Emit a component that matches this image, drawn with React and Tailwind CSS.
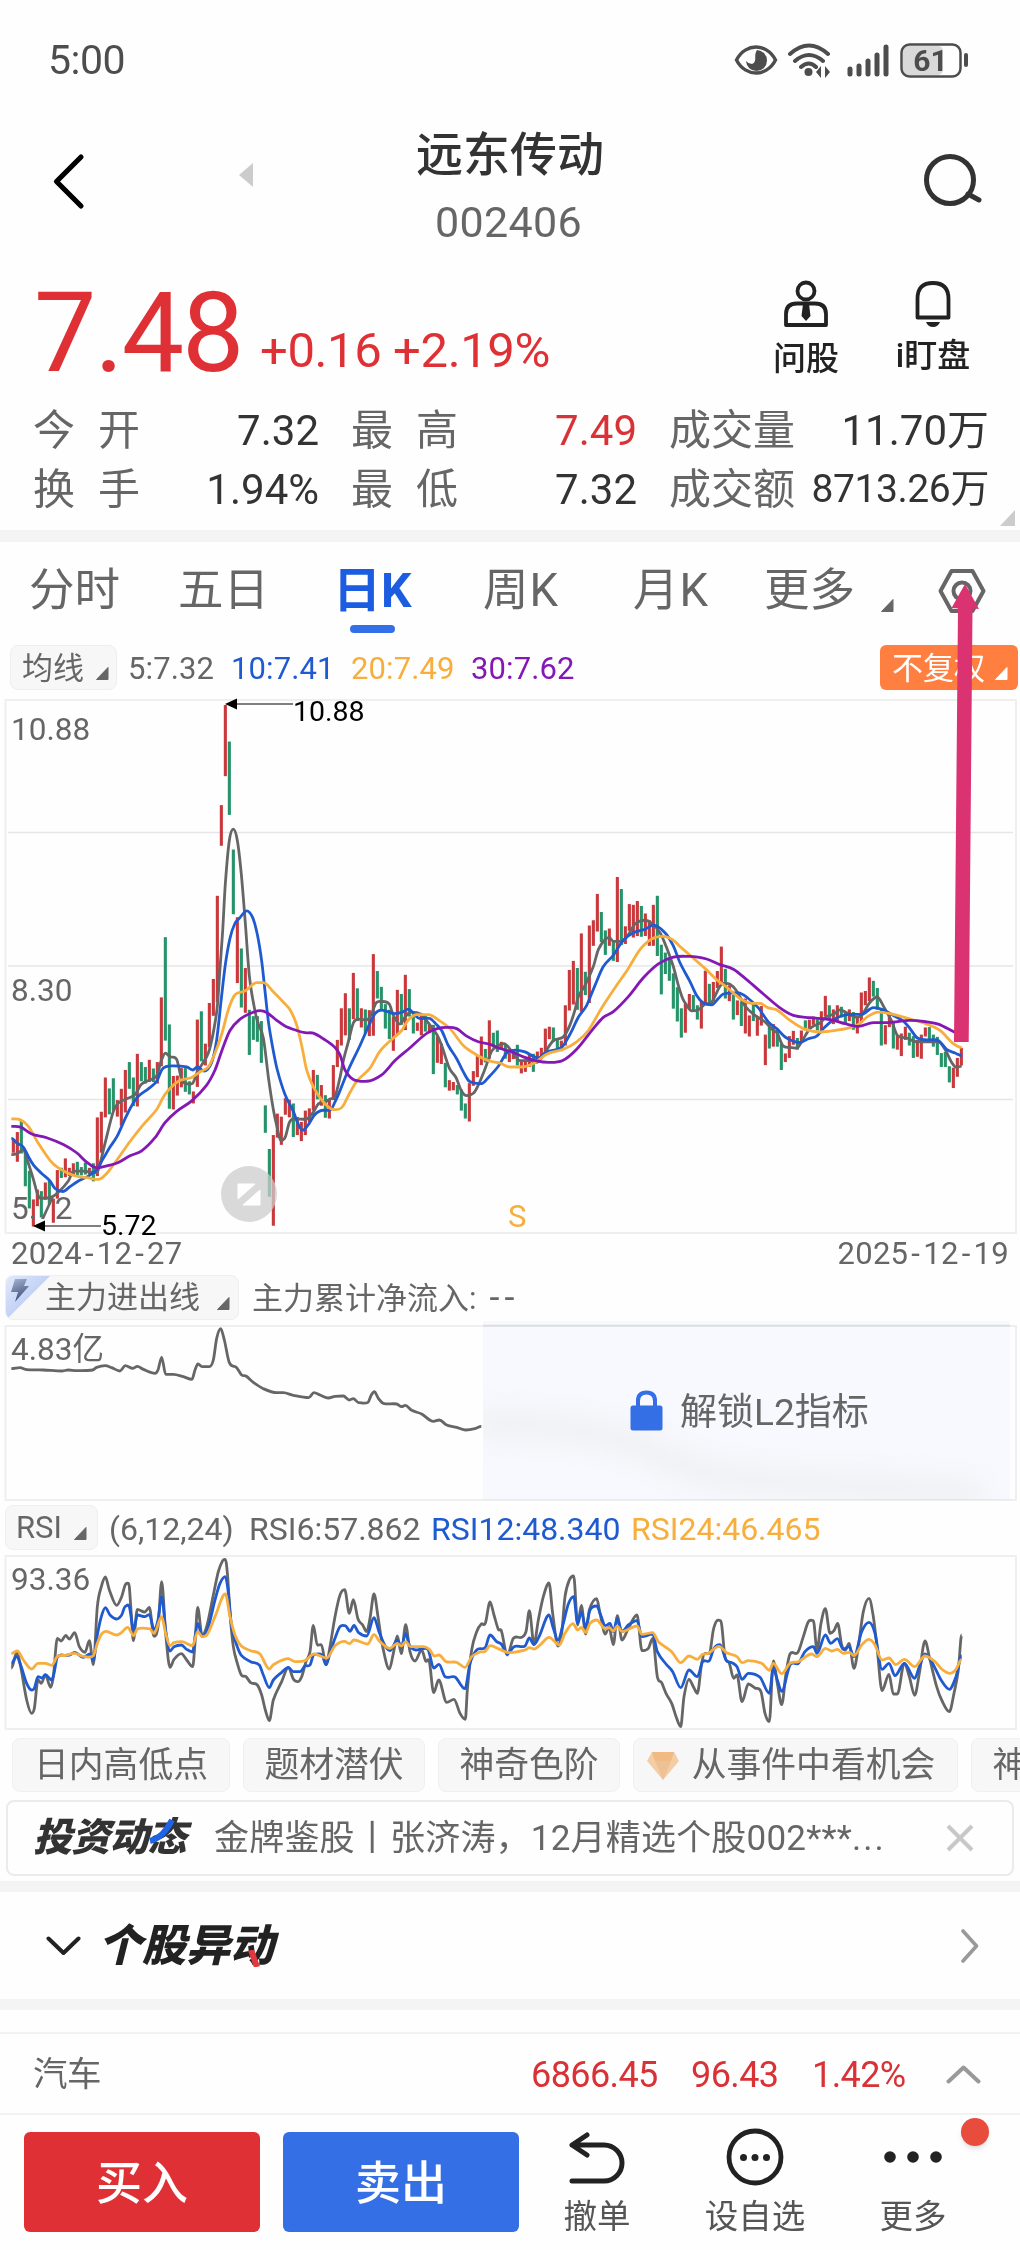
import clsx from 'clsx';

// Daily bars: r = up, g = down, followed by high-low in plot units
const BARS = `r1195-1230 r1175-1254 g1145-1232 g1225-1319 g1278-1378 r1354-1426 r1328-1372 g1332-1402 r1309-1355 g1305-1368
r1352-1416 r1276-1352 g1270-1297 r1245-1295 r1270-1292 r1258-1290 g1254-1290 g1268-1290 g1256-1288 r1270-1288
g1258-1306 r1136-1292 r1121-1230 r1030-1136 g1059-1128 g1032-1118 r1090-1134 r1060-1158 r1010-1123 g989-1060
g1030-1106 r967-1107 g989-1040 g1002-1046 r983-1042 g1006-1042 r989-1046 r817-1000 g657-932 g889-1113
r1026-1115 r1025-1078 r1005-1056 g1005-1068 g1040-1075 r1067-1099 r876-1055 g854-987 r940-998 r832-950
r768-866 r547-830 r306-414 r40-229 g137-332 g424-596 r604-779 g687-844 r739-858 g850-970
g867-930 g867-935 g880-991 g1104-1177 g1220-1347 r1183-1424 r1126-1190 r1134-1209 r1085-1129 r1089-1136
g1099-1188 r1135-1183 r1148-1199 r1118-1183 r1112-1148 r1010-1118 g1023-1088 r1050-1105 g1077-1137 r1088-1139
r997-1090 r930-1002 r846-945 r806-918 g846-930 r752-875 g793-880 r846-897 g849-912 r851-920
r702-919 g747-820 g789-850 g835-900 g850-928 r868-959 r797-916 g808-890 r757-904 g795-868
g862-913 r884-906 r866-918 g866-908 r888-912 g890-1021 r920-991 r940-994 g991-1056 r1037-1065
r1042-1064 g1050-1075 g1062-1118 g1099-1139 r1045-1147 r1013-1052 r970-1029 r921-997 g954-990 r878-980
g911-950 g905-962 r935-952 g943-980 r965-989 r955-981 g943-998 r988-1019 r982-1015 r970-1002
g967-1015 r961-987 r951-980 r900-965 r895-928 g897-935 g930-956 r932-960 r838-945 r744-852
r720-836 g739-850 r647-855 g749-811 r626-832 r612-680 r542-642 g590-670 g639-704 r634-680
g670-720 r497-723 g529-678 r628-675 r569-640 r571-658 r561-654 g574-656 r594-654 r612-680
r571-680 g547-707 g677-809 g698-755 g710-773 g753-847 g790-881 g846-924 r834-911 r808-850
g811-855 g838-876 r828-900 r746-832 g781-838 r776-828 r747-792 r682-780 g741-820 r785-827
g810-876 r825-864 g828-893 r820-913 r865-921 g835-880 r870-919 r840-892 r916-997 g892-953
r888-948 g900-948 g940-1010 r966-989 r920-978 r906-943 g925-956 r905-935 g878-905 r876-900
r868-890 g875-905 r854-905 r813-868 g838-875 r849-888 r838-880 g842-870 g855-888 r849-880
g856-903 r870-913 r804-885 r800-838 r764-827 g773-815 g792-850 g850-945 r891-942 r862-896
g880-953 r918-956 r913-973 r895-930 g911-945 g920-978 r930-975 r916-980 r897-921 g896-930
g916-948 g922-970 g965-1002 g962-1002 g1000-1043 r1004-1058 r978-1028 r951-998`.split(/\s+/);

// Each line is three runs of points; every run starts one screen further right
const MA5 = [
    '34,1235 52,1232 70,1222 82,1250 100,1300 115,1345 136,1350 155,1348 175,1335 205,1305 220,1279 250,1279 285,1283 295,1275 315,1205 340,1120 355,1098 376,1088 405,1075 424,1048 448,1037 470,1025 484,985 496,965 510,975 530,982 545,1035 556,1046 578,1045 592,1015 606,995 625,965 640,910 652,840 660,740 668,640 676,515 688,400 700,370 712,400 724,490 736,620 748,760 760,830 772,880 790,925 806,1035 820,1115 832,1165 842,1197 855,1190 868,1150 880,1140 916,1141 940,1122 955,1100 976,1095 990,1087 1005,1080',
    '0,1030 10,985 25,935 40,885 55,875 80,877 95,860 108,832 125,828 148,835 160,865 180,888 196,868 212,856 244,862 265,885 290,915 305,945 328,1005 348,1030 364,1065 380,1078 400,1072 415,1050 436,1005 455,960 475,945 492,940 515,960 540,985 570,985 590,990 610,970 640,932 670,922 690,890 705,850 715,815 735,785 760,735 775,690 795,663 808,658 820,668 845,668 865,650 885,622 915,612 935,620 960,645 980,685 1000,735 1015,785',
    '8,820 20,838 35,853 55,850 75,835 95,830 118,790 130,780 150,782 170,800 195,840 225,865 255,882 280,905 292,912 308,945 330,950 350,952 365,935 390,900 420,885 440,868 460,862 480,850 500,858 530,870 545,865 570,830 592,816 610,840 635,880 652,918 680,925 710,935 740,935 775,935 795,955 815,990 830,1003 845,1000',
];
const MA10 = [
    '34,1192 52,1205 70,1215 85,1240 100,1262 125,1285 150,1305 165,1325 188,1333 210,1320 235,1305 265,1292 290,1275 310,1245 330,1215 352,1185 375,1140 395,1105 415,1080 445,1060 470,1040 485,1010 498,1001 520,999 560,1002 578,1010 592,1002 612,1013 635,990 650,930 664,820 676,730 690,660 704,622 720,605 740,587 758,605 772,650 785,720 795,800 805,880 818,950 832,1010 855,1075 880,1120 895,1155 908,1170 925,1155 945,1128 970,1117 990,1117 1005,1095',
    '0,1065 25,1010 60,945 85,895 105,860 125,851 165,860 188,856 205,848 235,872 270,873 290,890 305,905 325,945 350,980 370,1015 388,1040 425,1046 445,1030 475,1000 500,965 525,957 555,962 595,978 620,962 665,950 690,915 715,870 740,838 765,785 790,735 820,705 850,665 880,645 915,636 940,625 975,645 1000,680',
    '0,725 30,775 50,812 70,832 95,837 115,820 130,808 175,805 205,820 235,845 265,882 290,900 320,925 360,937 385,927 410,920 430,900 455,880 480,868 510,862 545,862 580,844 610,850 640,865 670,880 690,900 712,925 740,930 775,932 800,955 825,965 845,972',
];
const MA20 = [
    '34,1140 60,1142 85,1160 115,1205 150,1250 175,1270 220,1290 265,1297 295,1301 320,1285 350,1250 390,1200 430,1155 470,1115 495,1075 535,1040 575,1030 600,1015 625,1002 645,965 665,915 685,850 705,810 735,800 770,778 790,778 820,802 850,830 870,850 890,890 905,945 920,1010 940,1055 970,1095 1000,1115',
    '5,1110 30,1070 50,1040 90,1005 120,960 160,925 185,905 205,877 230,863 265,863 300,880 330,900 370,945 410,970 445,985 480,992 510,1002 545,1002 580,993 620,968 670,955 710,935 745,905 785,845 830,785 865,740 900,690 935,662 970,655 1000,665',
    '0,682 30,705 75,740 110,770 140,790 180,820 215,833 240,833 265,845 290,850 330,878 370,900 420,909 480,903 530,892 565,867 595,856 630,860 680,872 740,888 780,905 820,940 845,950',
];
const MA30 = [
    '34,1160 62,1162 95,1180 140,1190 190,1208 230,1230 260,1255 290,1270 330,1263 355,1256 390,1238 425,1225 465,1190 495,1150 530,1120 575,1092 620,1050 645,1010 665,960 690,905 720,875 750,860 780,852 800,857 830,878 855,893 890,905 915,911 940,912 970,927 1005,950',
    '0,970 15,1010 40,1035 80,1040 125,1023 165,985 205,955 265,910 320,897 350,900 380,920 415,935 450,942 480,953 510,960 550,975 590,986 625,990 668,985 710,955 760,900 790,870 820,855 865,815 910,765 955,728 1000,710',
    '30,708 80,715 120,730 160,742 200,770 250,808 300,845 340,865 390,871 450,876 495,887 535,894 580,884 625,884 690,878 740,882 775,888 820,908 835,915',
];
const FLOW = ['34,326 60,323 80,329 130,330 185,333 205,330 230,332 278,330 290,322 315,317 335,323 360,333 376,317 398,325 412,319 430,328 465,340 474,330 485,292 497,343 520,343 550,350 576,358 585,330 594,312 606,320 628,320 640,300 650,235 662,206 673,240 688,308 710,323 725,345 738,348 760,367 790,386 830,398 850,398 880,406 926,413 942,398 960,405 985,414 1005,409 1030,408 1048,420 1060,416 1076,428 1104,427 1114,405 1123,395 1135,415 1150,430 1190,432 1205,440 1216,436 1235,451 1265,462 1300,484 1318,480 1340,495 1370,502 1397,510 1425,506 1444,499'];
const RSI6 = [
    '34,505 50,458 62,500 80,600 95,640 103,625 114,540 124,550 136,525 152,562 160,530 172,415 184,423 197,406 208,417 224,398 238,440 255,457 268,422 280,494 292,320 304,260 316,231 328,270 350,316 365,290 376,254 386,250 393,330 400,422 412,328 434,336 448,322 462,409 474,380 485,245 497,400 510,502 522,478 544,461 560,480 578,500 585,430 593,322 606,405 620,380 640,285 655,215 668,182 676,178 683,230 690,340 700,440 712,490 724,525 738,530 752,548 772,555 785,585 796,630 808,662 820,600 845,545 865,502 880,537 893,545 905,530 918,485 930,455 940,376 952,435 964,434 978,494 990,440 1005,350 1020,285 1034,269 1048,340 1060,299 1074,357 1088,375 1100,395 1110,355 1122,282 1134,350 1148,440 1168,507 1180,460 1192,408 1204,461 1217,374 1230,455 1245,483 1265,450 1277,483 1288,485 1301,578 1316,540 1340,607 1362,598 1380,640 1396,658 1402,570 1415,450 1430,395 1444,372 1456,370 1470,306 1482,345 1495,388',
    '4,392 22,465 40,415 65,412 78,395 88,332 102,432 115,360 130,290 147,249 158,340 174,438 185,400 195,290 208,240 221,228 233,375 244,316 257,402 268,330 290,296 300,340 316,402 327,380 340,434 352,347 366,420 385,385 411,345 426,452 445,445 458,415 472,530 485,548 498,580 515,610 530,655 542,680 552,590 567,538 580,560 592,580 605,490 615,460 628,460 640,390 650,363 662,362 675,470 688,490 701,535 711,525 726,605 745,552 765,564 783,575 795,640 808,665 820,483 832,550 845,614 858,520 870,462 893,458 910,410 925,365 940,362 951,450 963,370 976,326 990,400 1002,392 1013,370 1025,435 1036,450 1047,430 1062,505 1075,440 1090,335 1107,295 1120,350 1132,450 1146,572 1167,523 1180,582 1192,582 1213,490 1228,530 1244,586 1258,520 1275,423 1290,480 1310,560 1325,600 1348,635 1362,580 1375,510 1385,405',
];
const RSI12 = [
    '34,490 50,470 62,495 80,550 95,570 103,565 114,530 126,534 136,524 155,540 162,520 172,472 197,466 210,465 224,457 250,472 270,462 280,480 292,405 304,350 316,323 330,345 350,357 365,345 376,319 388,320 401,390 412,345 434,350 448,344 462,388 474,360 485,290 497,390 510,453 522,440 544,435 560,448 578,456 585,410 593,370 607,410 625,380 645,300 660,250 676,230 684,270 695,380 710,435 724,466 752,485 778,495 790,525 808,563 820,540 845,517 865,502 880,515 900,515 915,498 930,495 942,463 966,465 978,494 990,460 1005,415 1020,380 1036,377 1050,394 1062,376 1075,397 1100,408 1122,353 1137,395 1155,437 1170,452 1192,420 1204,442 1217,400 1228,435 1248,450 1270,446 1285,450 1301,504 1317,493 1335,530 1365,531 1395,566 1410,490 1430,450 1456,442 1470,405 1490,425',
    '4,432 22,462 42,440 75,438 88,414 102,434 118,408 147,345 160,385 174,420 190,370 205,312 221,290 233,370 244,336 257,382 270,330 290,318 302,345 316,377 330,370 340,395 352,357 366,395 385,375 411,362 426,410 458,402 472,455 498,492 518,515 542,563 567,510 592,530 608,485 628,482 642,445 660,434 678,480 695,488 711,500 726,538 745,520 780,532 808,580 820,505 832,540 845,574 870,495 895,490 915,455 940,440 951,460 976,405 992,430 1012,416 1030,448 1047,440 1062,470 1085,395 1107,367 1125,400 1146,508 1167,490 1185,527 1213,490 1244,535 1258,500 1275,462 1295,485 1325,543 1348,568 1368,530 1385,468',
];
const RSI24 = [
    '34,460 52,453 70,480 95,507 114,490 136,490 155,496 172,470 197,466 224,460 250,469 280,467 292,430 304,403 318,394 350,405 365,397 383,382 401,407 412,387 448,386 462,400 485,350 497,400 510,437 522,428 545,425 578,437 593,395 607,410 622,403 645,350 676,282 690,350 705,405 724,438 752,452 780,462 808,507 820,494 865,476 885,485 915,482 942,462 980,474 1005,437 1034,424 1048,431 1062,420 1103,432 1122,404 1140,425 1170,445 1192,430 1204,438 1217,425 1232,440 1270,440 1288,448 1303,468 1317,465 1338,485 1370,487 1395,502 1415,470 1440,456 1456,454 1470,437',
    '0,448 25,458 75,450 88,443 102,447 120,435 147,412 178,435 195,400 219,371 233,390 244,382 257,398 270,370 290,360 316,387 328,383 340,393 352,378 366,395 411,378 426,403 458,398 475,425 515,455 542,488 567,468 592,478 608,463 625,460 657,439 680,458 711,470 726,488 745,482 785,490 808,511 820,490 845,521 870,490 895,485 935,462 951,470 976,445 995,453 1012,448 1030,460 1048,457 1062,467 1085,435 1107,418 1125,435 1146,480 1167,474 1187,494 1213,478 1244,500 1275,468 1305,485 1325,507 1350,520 1368,508 1385,478',
];

const PRICE_UNIT = 2.658;

// Smooth curve through the points, flat at every local high and low
function curve(runs, step, unitY) {
    const pts = runs.flatMap((run, n) =>
        run.split(' ').map((pair) => {
            const [x, y] = pair.split(',').map(Number);
            return [(x + n * step) / 3, y / unitY];
        })
    );
    const slope = pts.map((p, i) => {
        const a = pts[i - 1];
        const b = pts[i + 1];
        if (!a || !b || (p[1] - a[1]) * (b[1] - p[1]) <= 0) return 0;
        return (b[1] - a[1]) / (b[0] - a[0]);
    });
    let d = `M${pts[0][0]} ${pts[0][1]}`;
    for (let i = 1; i < pts.length; i++) {
        const [x0, y0] = pts[i - 1];
        const [x1, y1] = pts[i];
        const h = (x1 - x0) / 3;
        d += `C${x0 + h} ${y0 + slope[i - 1] * h} ${x1 - h} ${y1 - slope[i] * h} ${x1} ${y1}`;
    }
    return d;
}

function Line({ runs, step, unitY, color }) {
    return <path d={curve(runs, step, unitY)} fill="none" stroke={color} strokeWidth="2.8" strokeLinejoin="round" />;
}

function Corner({ className }) {
    return (
        <svg className={clsx('shrink-0', className)} width="13" height="13" viewBox="0 0 13 13">
            <path d="M12 0.5V12.5H0.5Z" fill="currentColor" stroke="currentColor" strokeLinejoin="round" />
        </svg>
    );
}

function Chip({ className, children }) {
    return (
        <div className={clsx('flex h-[45px] shrink-0 items-center rounded-lg border border-[#efefef] bg-[#f7f7f7] text-[#666]', className)}>
            {children}
        </div>
    );
}

function StatusBar() {
    return (
        <div className="flex h-[120px] items-center pl-[48px] text-[#4d4d4d]">
            <div className="w-[686px] pt-[2px] text-[41px] tracking-[-0.5px]">5:00</div>
            <svg width="236" height="36" viewBox="733 41 236 36">
                <path d="M735.500 59C740 50 748 46 755 46S770 50 774.500 59C770 68 762 72 755 72S740 68 735.500 59Z" fill="none" stroke="#4d4d4d" strokeWidth="3.400" />
                <path d="M756 49A10.500 10.500 0 1 1 745 60A8 8 0 0 0 751 63C757 60 752 55 756 49Z" fill="#4d4d4d" />
                <g fill="none" stroke="#4d4d4d" strokeWidth="4" strokeLinecap="round">
                    <path d="M789 53Q808 36 827 53M794 60Q808 48 822 60M800 66Q808 59 815 66" />
                </g>
                <circle cx="807.500" cy="71" r="4" fill="#4d4d4d" />
                <path d="M820 65V77L815 71ZM824 65V77L829 71Z" fill="#4d4d4d" />
                <g stroke="#4d4d4d" strokeWidth="5" strokeLinecap="round">
                    <path d="M849 68V73M858 65V73M867 60V73M876 54V73M885 46V73" />
                </g>
                <rect x="902" y="45" width="40" height="29" rx="5" fill="#d9d9d9" />
                <rect x="900.500" y="43.500" width="59" height="32" rx="8" fill="none" stroke="#4d4d4d" strokeWidth="2.500" />
                <path d="M965 54V64" stroke="#4d4d4d" strokeWidth="4" strokeLinecap="round" />
                <text x="929.500" y="70" textAnchor="middle" fontSize="30" fontWeight="700" fill="#4d4d4d">61</text>
            </svg>
        </div>
    );
}

function Header() {
    return (
        <div className="flex h-[140px] items-start">
            <svg className="ml-[50px] mt-[30px]" width="40" height="64" viewBox="0 0 40 64">
                <path d="M31 7L6.500 31.500L31 56" fill="none" stroke="#000" strokeWidth="5.200" strokeLinecap="round" strokeLinejoin="round" />
            </svg>
            <svg className="ml-[149px] mt-[43px]" width="14" height="24" viewBox="0 0 14 24">
                <path d="M14 0V24L0 12Z" fill="#ccc" />
            </svg>
            <div className="w-[514px] text-center">
                <div className="mt-[8px] text-[47px] font-medium leading-[54px] text-[#333]">远东传动</div>
                <div className="-mr-[1px] mt-[18px] -ml-[4px] text-[43px] leading-[44px] tracking-[0.3px] text-[#666]">002406</div>
            </div>
            <svg className="ml-[152px] mt-[30px]" width="64" height="60" viewBox="0 0 64 60">
                <circle cx="31" cy="30" r="23.500" fill="none" stroke="#333" strokeWidth="5" />
                <path d="M49 44L60 50" stroke="#333" strokeWidth="5" strokeLinecap="round" />
            </svg>
        </div>
    );
}

function Stat({ label, value, red, small }) {
    return (
        <div className="flex items-center justify-between whitespace-nowrap pt-px">
            <div className={clsx('flex justify-between text-[#666]', label.length === 2 && 'w-[107px]')}>
                {label.length === 2 ? label.split('').map((c) => <span key={c}>{c}</span>) : label}
            </div>
            <div className={clsx(red ? 'text-[#d93236]' : 'text-[#333]', small && 'text-[39px] tracking-[-0.4px]')}>{value}</div>
        </div>
    );
}

function Quote() {
    return (
        <div className="h-[270px]">
            <div className="flex h-[140px] text-[#df3135]">
                <div className="w-[224px] pl-[34px] text-[111px] leading-[147px] tracking-[-2px]">7.48</div>
                <div className="w-[512px] pl-[36px] text-[49px] leading-[182px] tracking-[-0.4px]">+0.16 +2.19%</div>
                <div className="flex w-[140px] flex-col items-center pt-[20px] text-[33px] font-medium text-[#222]">
                    <svg width="46" height="48" viewBox="0 0 46 48" fill="none" stroke="#222" strokeWidth="3.800">
                        <circle cx="23" cy="11" r="8.500" />
                        <path d="M3 45V34Q3 23.500 14 23.500H32Q43 23.500 43 34V45Z" strokeLinejoin="round" />
                        <path d="M20 24H26L27.500 36L23 41L18.500 36Z" fill="#222" stroke="none" />
                    </svg>
                    <div className="mt-[13px] leading-[36px]">问股</div>
                </div>
                <div className="flex w-[114px] flex-col items-center pt-[20px] text-[33px] font-medium text-[#222]">
                    <svg width="40" height="48" viewBox="0 0 40 48" fill="none" stroke="#222" strokeWidth="3.800">
                        <path d="M4.500 37.500V19Q4.500 3 20 3T35.500 19V37.500Z" strokeLinejoin="round" />
                        <path d="M13 42H27Q25 47 20 47T13 42Z" fill="#222" stroke="none" />
                    </svg>
                    <div className="mt-[10px] whitespace-nowrap leading-[36px]">i盯盘</div>
                </div>
            </div>
            <div className="grid grid-cols-[286px_286px_320px] grid-rows-[59px_59px] gap-x-8 pl-[33px] text-[42px]">
                <Stat label="今开" value="7.32" />
                <Stat label="最高" value="7.49" red />
                <Stat label="成交量" value="11.70万" />
                <Stat label="换手" value="1.94%" />
                <Stat label="最低" value="7.32" />
                <Stat label="成交额" value="8713.26万" small />
            </div>
            <svg className="-mt-[8px] ml-[1000px]" width="20" height="16" viewBox="0 0 20 16">
                <path d="M15 0V16H0Z" fill="#ccc" />
            </svg>
        </div>
    );
}

function Tabs() {
    return (
        <div className="flex h-[98px] items-center whitespace-nowrap text-[45.5px] leading-none text-[#666]">
            <div className="w-[149px] pl-[29px]">分时</div>
            <div className="w-[155px] pl-[29px]">五日</div>
            <div className="flex w-[150px] flex-col pl-[29px] pt-[18px] text-[48px] font-bold text-[#1b5ce0]">
                日K
                <span className="ml-[17px] mt-[10px] h-[8px] w-[45px] rounded-full bg-[#336fe8]" />
            </div>
            <div className="w-[150px] pl-[29px] tracking-[1px]">周K</div>
            <div className="w-[130px] pl-[29px] tracking-[1px]">月K</div>
            <div className="w-[147px] pl-[30px]">更多</div>
            <Corner className="mt-[28px]" />
            <svg className="ml-[44px]" width="48" height="46" viewBox="0 0 48 46" fill="none" stroke="#666" strokeWidth="4">
                <path d="M13.500 3H34.500L45.500 23L34.500 43H13.500L2.500 23Z" strokeLinejoin="round" />
                <circle cx="24" cy="23" r="8.500" />
            </svg>
        </div>
    );
}

// Dates are set with roomy hyphens
function DateLabel({ date }) {
    return (
        <span className="-mt-[4px] flex">
            {date.split(/(-)/).map((part, i) => (
                <span key={i} className={part === '-' ? 'px-[3px]' : ''}>{part}</span>
            ))}
        </span>
    );
}

function PriceChart() {
    return (
        <div>
            <div className="flex h-[59px] items-start pl-[10px] pt-[5px] text-[31px]">
                <Chip className="w-[107px] gap-[12px] pl-[11px]">
                    <span className="pt-[3px]">均线</span>
                    <Corner className="mt-[11px]" />
                </Chip>
                <div className="flex h-[45px] items-center whitespace-nowrap pl-[11px] pt-[4px] tracking-[0.1px]">
                    <span className="w-[103px] text-[#666]">5:7.32</span>
                    <span className="w-[120px] text-[#1f5ad0]">10:7.41</span>
                    <span className="w-[120px] text-[#f7ae3c]">20:7.49</span>
                    <span className="w-[409px] text-[#8418b5]">30:7.62</span>
                </div>
                <div className="flex h-[45px] w-[138px] items-center gap-[10px] rounded-md bg-[#ff7f41] pl-[12px] text-white">
                    <span className="pt-[3px]">不复权</span>
                    <Corner className="mt-[12px]" />
                </div>
            </div>
            <svg className="overflow-visible" width="1020" height="537" viewBox="0 9 1020 537">
                <rect x="5.500" y="10" width="1010.500" height="533" fill="none" stroke="#eee" strokeWidth="1.800" />
                <path d="M8 142.500H1013M8 276H1013M8 409.500H1013" stroke="#e6e6e6" strokeWidth="1.300" />
                {BARS.map((bar, i) => {
                    const [hi, lo] = bar.slice(1).split('-').map(Number);
                    return (
                        <rect
                            key={i}
                            x={11.8 + i * 4}
                            y={hi / PRICE_UNIT}
                            width="3.1"
                            height={(lo - hi) / PRICE_UNIT}
                            fill={bar[0] === 'r' ? '#c9393c' : '#26946a'}
                        />
                    );
                })}
                <g fill="#666" fontSize="31.500">
                    <text x="11" y="50">10.88</text>
                    <text x="11" y="311">8.30</text>
                    <text x="11" y="529">5.72</text>
                </g>
                <Line runs={MA5} step={1020} unitY={PRICE_UNIT} color="#666" />
                <Line runs={MA10} step={1020} unitY={PRICE_UNIT} color="#1f5ad0" />
                <Line runs={MA20} step={1020} unitY={PRICE_UNIT} color="#f7ae3c" />
                <Line runs={MA30} step={1020} unitY={PRICE_UNIT} color="#8418b5" />
                <path d="M235 14H293M44 536H101" stroke="#555" strokeWidth="1.300" />
                <path d="M225 14L237 8.500V19.500ZM33 536L45 530.500V541.500Z" />
                <text x="293" y="31" fontSize="28.500">10.88</text>
                <text x="101" y="544.500" fontSize="28.500">5.72</text>
                <circle cx="249" cy="504" r="28" fill="#ccc" fillOpacity="0.75" />
                <path d="M238 494H255L238 509ZM260 500V515H243Z" fill="#fff" stroke="#fff" strokeLinejoin="round" />
                <text x="508" y="537" fontSize="31" fill="#f7ae3c">S</text>
            </svg>
            <div className="flex h-[39px] items-center justify-between pl-[11px] pr-[11px] text-[31px] leading-none tracking-[0.3px] text-[#666]">
                <DateLabel date="2024-12-27" />
                <DateLabel date="2025-12-19" />
            </div>
        </div>
    );
}

function FlowPanel() {
    return (
        <div>
            <div className="flex h-[46px] items-start pl-[5px] text-[31px] text-[#666]">
                <Chip className="w-[234px] overflow-hidden">
                    <svg className="shrink-0" width="46" height="45" viewBox="0 0 46 45">
                        <defs>
                            <linearGradient id="bolt" x1="0" y1="0" x2="0.3" y2="1">
                                <stop offset="0" stopColor="#a7b4d6" />
                                <stop offset="1" stopColor="#3f4f78" />
                            </linearGradient>
                            <linearGradient id="flag" x1="0" y1="0" x2="0.6" y2="0.6">
                                <stop offset="0" stopColor="#e3eafb" />
                                <stop offset="1" stopColor="#bccdf4" />
                            </linearGradient>
                        </defs>
                        <path d="M0 0H45L0 45Z" fill="url(#flag)" />
                        <path d="M9 4H21L18 11H23L9 27L12 17H5Z" fill="url(#bolt)" />
                    </svg>
                    <span className="-ml-[7px] w-[172px] pt-[2px]">主力进出线</span>
                    <Corner className="mt-[11px]" />
                </Chip>
                <span className="ml-[13px] leading-[48px]">主力累计净流入:</span>
                <span className="ml-[13px] text-[36px] leading-[46px] tracking-[5px]">--</span>
            </div>
            <div className="relative h-[180px]">
                <svg width="1020" height="180" viewBox="0 61 1020 180">
                    <rect x="5.500" y="66" width="1010.500" height="174" fill="none" stroke="#eee" strokeWidth="1.800" />
                    <text x="11" y="100" fontSize="31.500" fill="#666">4.83亿</text>
                    <Line runs={FLOW} step={1560} unitY={3} color="#666" />
                </svg>
                <div className="absolute left-[483px] top-0 flex h-[179px] w-[527px] items-center overflow-hidden bg-[#f9faff] pl-[147px] text-[37px] text-[#666] mix-blend-multiply">
                    {/* faded continuation of the flow line */}
                    <svg className="absolute left-0 top-0" width="527" height="179" viewBox="0 0 527 179">
                        <path d="M-10 104C60 100 130 110 190 140S380 160 500 175" fill="none" stroke="#f1f2f6" strokeWidth="32" className="blur-md" />
                        <path d="M0 4.500H527" stroke="#ececee" strokeWidth="1.800" />
                    </svg>
                    <svg className="relative" width="33" height="41" viewBox="0 0 33 41">
                        <path d="M8 18V11Q8 2.500 16.500 2.500T25 11V18" fill="none" stroke="#346fe6" strokeWidth="4" />
                        <rect x="0.500" y="15.500" width="32" height="25" rx="2.500" fill="#346fe6" />
                    </svg>
                    <span className="relative ml-[17px] pt-[3px] leading-none">解锁L2指标</span>
                </div>
            </div>
        </div>
    );
}

function RsiPanel() {
    return (
        <div>
            <div className="flex h-[54px] items-start whitespace-nowrap pl-[5px] pt-[4px] text-[32px] text-[#666]">
                <Chip className="w-[93px] gap-[12px] pl-[10px] text-[31px]">
                    <span className="pt-[2px]">RSI</span>
                    <Corner className="mt-[11px]" />
                </Chip>
                <div className="flex h-[45px] items-center pl-[11px] pt-[3px]">
                    <span className="w-[140px]">(6,12,24)</span>
                    <span className="w-[182px]">RSI6:57.862</span>
                    <span className="w-[200px] text-[#1f5ad0]">RSI12:48.340</span>
                    <span className="text-[#f7ae3c]">RSI24:46.465</span>
                </div>
            </div>
            <svg width="1020" height="176" viewBox="0 55 1020 176">
                <rect x="5.500" y="56" width="1010.500" height="173" fill="none" stroke="#eee" strokeWidth="1.800" />
                <text x="11" y="89.500" fontSize="31.500" fill="#666">93.36</text>
                <Line runs={RSI6} step={1500} unitY={3} color="#666" />
                <Line runs={RSI12} step={1500} unitY={3} color="#1f5ad0" />
                <Line runs={RSI24} step={1500} unitY={3} color="#f7ae3c" />
            </svg>
        </div>
    );
}

function Tag({ className, children }) {
    return (
        <div className={clsx('flex h-[54px] shrink-0 items-center justify-center rounded-lg border border-[#f0f0f0] bg-[#f7f7f7]', className)}>
            {children}
        </div>
    );
}

function Tags() {
    return (
        <div className="flex h-[69px] gap-[13px] overflow-hidden whitespace-nowrap pl-[12px] pt-[7px] text-[34.800px] leading-none text-[#666]">
            <Tag className="w-[218px]">日内高低点</Tag>
            <Tag className="w-[182px]">题材潜伏</Tag>
            <Tag className="w-[182px]">神奇色阶</Tag>
            <Tag className="w-[325px] pr-[9px]">
                <svg className="mr-[13px] shrink-0" width="32" height="29" viewBox="0 0 32 29">
                    <path d="M5 1H27L32 10L16 29L0 10Z" fill="#f3cda5" />
                    <path d="M5 1H27L24 10H8Z" fill="#efba84" />
                    <path d="M8 10H24L16 29Z" fill="#eec095" />
                </svg>
                从事件中看机会
            </Tag>
            <Tag className="w-[182px]">神奇量能</Tag>
        </div>
    );
}

function News() {
    return (
        <div className="mx-[6px] flex h-[76px] items-center rounded-lg border-2 border-[#ebebeb] pl-[25px]">
            <div className="relative w-[181px] text-[39px] font-black italic leading-none tracking-[-0.800px] text-[#333]">
                投资动态
                <svg className="absolute left-[115px] top-[-1px]" width="30" height="26" viewBox="0 0 30 26">
                    <path d="M2 23Q15 20 24 2" fill="none" stroke="#1f63e6" strokeWidth="6" />
                </svg>
            </div>
            <div className="w-[732px] whitespace-nowrap text-[35px] leading-none tracking-[0.200px] text-[#666]">
                金牌鉴股丨张济涛，12月精选个股002***<span className="tracking-[2px]">...</span>
            </div>
            <svg width="28" height="28" viewBox="0 0 28 28">
                <path d="M2 2L26 26M26 2L2 26" stroke="#c8c8c8" strokeWidth="4" />
            </svg>
        </div>
    );
}

function Moves() {
    return (
        <div className="flex h-[107px] items-center">
            <svg className="ml-[46px]" width="35" height="20" viewBox="0 0 35 20">
                <path d="M2.500 2.500L17.500 17L32.500 2.500" fill="none" stroke="#222" strokeWidth="4" strokeLinecap="round" strokeLinejoin="round" />
            </svg>
            <div className="relative ml-[17px] w-[863px] text-[44px] font-black italic leading-none text-[#222]">
                个股异动
                <svg className="absolute left-[150px] top-[26px]" width="12" height="17" viewBox="0 0 12 17">
                    <path d="M3 0L9 17" stroke="#e0393d" strokeWidth="6" />
                </svg>
            </div>
            <svg width="18" height="34" viewBox="0 0 18 34">
                <path d="M2 2L15.500 17L2 32" fill="none" stroke="#999" strokeWidth="3.600" strokeLinecap="round" strokeLinejoin="round" />
            </svg>
        </div>
    );
}

function Sector() {
    return (
        <div className="flex h-[83px] items-center border-y-2 border-[#f2f2f2] pt-[2px] text-[36px] leading-none tracking-[-0.6px] text-[#d93236]">
            <div className="w-[531px] pl-[33px] text-[34.500px] text-[#666]">汽车</div>
            <div className="w-[160px]">6866.45</div>
            <div className="w-[121px]">96.43</div>
            <div className="w-[134px]">1.42%</div>
            <svg width="35" height="19" viewBox="0 0 35 19">
                <path d="M2.500 16.500L17.500 2.500L32.500 16.500" fill="none" stroke="#999" strokeWidth="4" strokeLinecap="round" strokeLinejoin="round" />
            </svg>
        </div>
    );
}

function Action({ className, label, children }) {
    return (
        <div className={clsx('flex flex-col items-center text-[33.500px] leading-none text-[#555]', className)}>
            <svg width="60" height="60" viewBox="0 0 60 60">{children}</svg>
            <div className="mt-[12px]">{label}</div>
        </div>
    );
}

function ActionBar() {
    return (
        <div className="relative flex h-[135px] pl-[24px] pt-[17px] text-[46px] font-medium text-white">
            <div className="flex h-[100px] w-[236px] items-center justify-center rounded-md bg-[#df3135] pt-[2px]">买入</div>
            <div className="ml-[23px] flex h-[100px] w-[236px] items-center justify-center rounded-md bg-[#346fe6] pt-[2px]">卖出</div>
            <Action label="撤单" className="-mt-[4px] ml-[22px] w-[112px] font-normal">
                <path d="M20 7L5 17L20 27M6 17H37A18 18 0 0 1 37 53H5" fill="none" stroke="#222" strokeWidth="5" strokeLinejoin="round" strokeLinecap="round" />
            </Action>
            <Action label="设自选" className="-mt-[4px] ml-[46px] w-[112px] font-normal">
                <circle cx="30" cy="29" r="26" fill="none" stroke="#222" strokeWidth="4.800" />
                <g fill="#222">
                    <circle cx="18.500" cy="29.500" r="3.500" />
                    <circle cx="30" cy="29.500" r="3.500" />
                    <circle cx="41.500" cy="29.500" r="3.500" />
                </g>
            </Action>
            <Action label="更多" className="-mt-[4px] ml-[46px] w-[112px] font-normal">
                <g fill="#222">
                    <circle cx="7" cy="29" r="5.800" />
                    <circle cx="30" cy="29" r="5.800" />
                    <circle cx="53" cy="29" r="5.800" />
                </g>
            </Action>
            <span className="absolute left-[961px] top-[3px] h-[28px] w-[28px] rounded-full bg-[#e74c3c] shadow-md" />
        </div>
    );
}

function App() {
    return (
        <div className="relative h-[2250px] w-[1020px] overflow-hidden bg-[#fefefe] font-['Roboto','Noto_Sans_CJK_SC',sans-serif]">
            <StatusBar />
            <Header />
            <Quote />
            <div className="h-[12px] bg-[#f4f4f4]" />
            <Tabs />
            <PriceChart />
            <FlowPanel />
            <RsiPanel />
            <Tags />
            <News />
            <div className="mt-[5px] h-[11px] bg-[#f4f4f4]" />
            <Moves />
            <div className="mb-[22px] h-[11px] bg-[#f4f4f4]" />
            <Sector />
            <ActionBar />
            {/* pointer towards the chart settings */}
            <svg className="absolute left-[950px] top-[582px]" width="32" height="462" viewBox="950 582 32 462">
                <path d="M965 584L979 609L972.500 608.500L968.700 1042H954L958 608.500L951.500 608Z" fill="#db3271" />
            </svg>
        </div>
    );
}

export default App;
